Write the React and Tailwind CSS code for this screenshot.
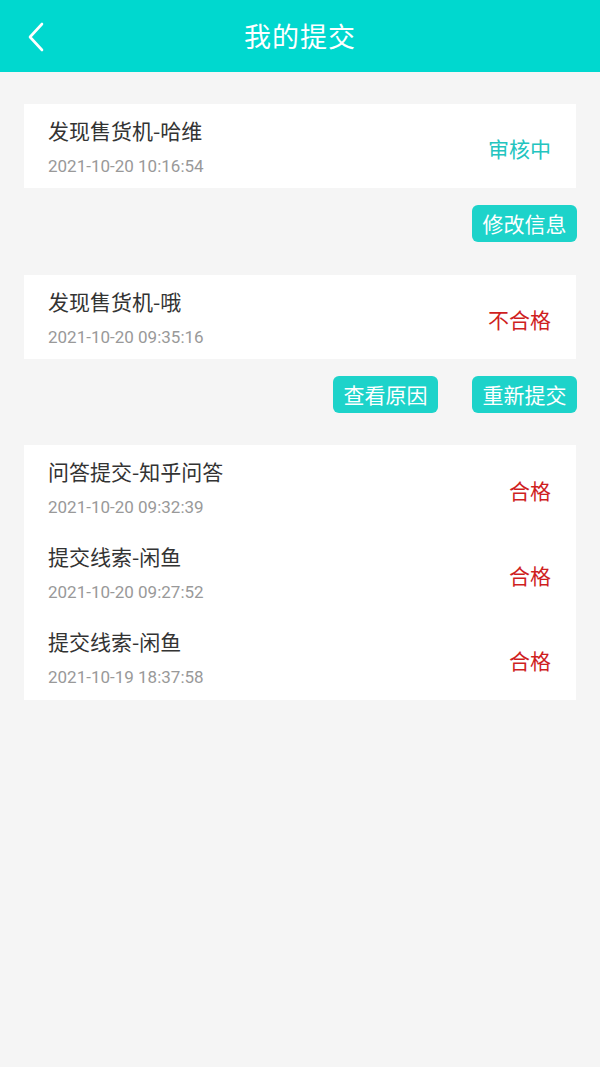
import React from "react";

const font = { fontFamily: '"Noto Sans CJK SC", Roboto, sans-serif' };

const Row = ({ title, time, status, color, h = "h-[85px]" }) => (
  <div className={`flex items-center justify-between ${h} pl-6 pr-[25px]`}>
    <div className="flex flex-col">
      <span className="text-[21px] leading-[28px] text-[#333]">{title}</span>
      <span className="text-[17px] leading-[22px] text-[#999] mt-[11px] font-['Roboto']">{time}</span>
    </div>
    <span className={`text-[21px] leading-[28px] mt-[4px] ${color}`}>{status}</span>
  </div>
);

const Btn = ({ children }) => (
  <button className="h-[37px] w-[105px] rounded-[6px] bg-[#1dd3ca] text-white text-[21px] leading-[37px]">
    {children}
  </button>
);

export default function App() {
  return (
    <div className="min-h-[1067px] bg-[#f5f5f5]" style={font}>
      <div className="relative h-[72px] bg-[#00d8cf] flex items-center justify-center">
        <svg className="absolute left-[25px] top-[22px]" width="22" height="30" viewBox="0 0 22 30" fill="none">
          <path d="M17 2 L5 15 L17 28" stroke="white" strokeWidth="2.6" strokeLinecap="round" strokeLinejoin="round" />
        </svg>
        <h1 className="text-[27px] text-white tracking-[1px]">我的提交</h1>
      </div>

      <div className="px-6 pt-8">
        <div className="bg-white">
          <Row h="h-[84px]" title="发现售货机-哈维" time="2021-10-20 10:16:54" status="审核中" color="text-[#23c4bf]" />
        </div>
        <div className="flex justify-end gap-[34px] mt-[17px] -mr-px">
          <Btn>修改信息</Btn>
        </div>

        <div className="bg-white mt-[33px]">
          <Row h="h-[84px]" title="发现售货机-哦" time="2021-10-20 09:35:16" status="不合格" color="text-[#cf1f1f]" />
        </div>
        <div className="flex justify-end gap-[34px] mt-[17px] -mr-px">
          <Btn>查看原因</Btn>
          <Btn>重新提交</Btn>
        </div>

        <div className="bg-white mt-[32px]">
          <Row title="问答提交-知乎问答" time="2021-10-20 09:32:39" status="合格" color="text-[#cf1f1f]" />
          <Row title="提交线索-闲鱼" time="2021-10-20 09:27:52" status="合格" color="text-[#cf1f1f]" />
          <Row title="提交线索-闲鱼" time="2021-10-19 18:37:58" status="合格" color="text-[#cf1f1f]" />
        </div>
      </div>
    </div>
  );
}
